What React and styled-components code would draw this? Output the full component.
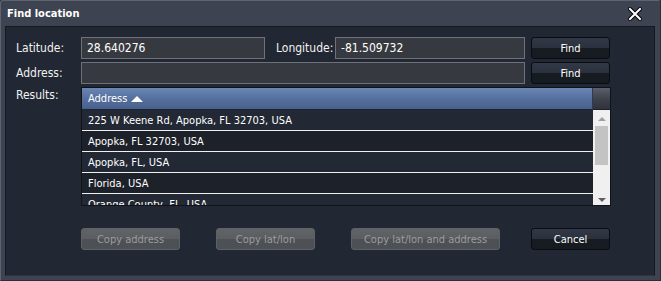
import React from "react";
import styled, { createGlobalStyle } from "styled-components";

const Global = createGlobalStyle`
  html, body { margin: 0; padding: 0; background: #2a2e36; }
  body { font-family: "DejaVu Sans Condensed", "DejaVu Sans", sans-serif; font-size: 11px; }
`;

const Frame = styled.div`
  width: 661px;
  height: 281px;
  box-sizing: border-box;
  background: #3d4350;
  border: 1px solid #5d6370;
  border-right-color: #2a2e36;
  border-bottom-color: #2a2e36;
  border-radius: 3px 3px 0 0;
  display: flex;
  flex-direction: column;
  padding: 0 5px 4px 4px;
`;

const TitleBar = styled.div`
  height: 25px;
  display: flex;
  align-items: center;
  justify-content: space-between;
  padding: 0 13px 0 2px;
  color: #fff;
  font-weight: bold;
  font-size: 11px;
  font-family: "DejaVu Sans Condensed", "DejaVu Sans", sans-serif;
`;

const Body = styled.div`
  flex: 1;
  background: #212733;
  border: 1px solid #151920;
  border-bottom-color: #2e3440;
  padding: 10px 0 0 10px;
  display: flex;
  flex-direction: column;
  color: #fff;
`;

const Row = styled.div`
  display: flex;
  align-items: center;
  height: 22px;
  margin-bottom: ${p => p.$mb || 0}px;
`;

const Label = styled.div`
  width: ${p => p.$w}px;
  color: #f2f2f2;
  font-size: 12px;
  font-family: "DejaVu Sans Condensed", "DejaVu Sans", sans-serif;
  margin-left: ${p => p.$ml || 0}px;
`;

const Input = styled.div`
  width: ${p => p.$w}px;
  height: 22px;
  box-sizing: border-box;
  background: #363a40;
  border: 1px solid #6e7278;
  color: #fff;
  font-size: 12px;
  display: flex;
  align-items: center;
  padding-left: 5px;
  margin-right: ${p => p.$mr || 0}px;
`;

const Button = styled.div`
  width: ${p => p.$w}px;
  height: 22px;
  box-sizing: border-box;
  border-radius: 3px;
  border: 1px solid ${p => (p.$disabled ? "#5e6165" : "#0a0c10")};
  background: ${p =>
    p.$disabled
      ? "linear-gradient(#616467 0, #5a5d61 50%, #4d5054 50%, #4d5054 100%)"
      : "linear-gradient(#323846 0, #2a303c 50%, #171b22 50%, #161a21 100%)"};
  color: ${p => (p.$disabled ? "#9c9c9c" : "#fff")};
  font-size: 11px;
  display: flex;
  align-items: center;
  justify-content: center;
  margin-left: ${p => p.$ml || 0}px;
`;

const ResultsRow = styled.div`
  display: flex;
  align-items: flex-start;
  margin-top: 3px;
`;

const ResultsLabel = styled(Label)`
  padding-top: 1px;
`;

const Table = styled.div`
  width: 530px;
  height: 119px;
  box-sizing: border-box;
  border: 1px solid #0f1217;
  display: grid;
  grid-template-columns: 1fr 17px;
  grid-template-rows: 22px 1fr;
  overflow: hidden;
`;

const Header = styled.div`
  background: linear-gradient(#6a86b3, #55709e 50%, #48608c);
  border-right: 1px solid #2c3a58;
  border-bottom: 1px solid #1c2230;
  display: flex;
  align-items: center;
  padding-left: 6px;
  color: #fff;
  font-size: 11px;
  gap: 4px;
`;

const CornerHead = styled.div`
  background: linear-gradient(#5b5f6b, #3f434d 50%, #30333b);
  border-bottom: 1px solid #1c2230;
`;

const Rows = styled.div`
  overflow: hidden;
`;

const Cell = styled.div`
  height: 20px;
  display: flex;
  align-items: center;
  padding-left: 6px;
  background: ${p => (p.$odd ? "#1d2129" : "#222834")};
  border-bottom: 1px solid #f0f0f0;
  color: #fff;
  font-size: 11px;
  white-space: nowrap;
`;

const Scroll = styled.div`
  background: #f0f0f0;
  display: flex;
  flex-direction: column;
  align-items: center;
  justify-content: space-between;
  padding: 7px 0 3px;
`;

const Thumb = styled.div`
  width: 13px;
  height: 39px;
  background: #c3c3c3;
  margin-top: -2px;
  margin-bottom: auto;
`;

const Arrow = styled.div`
  width: 0;
  height: 0;
  border-left: 4px solid transparent;
  border-right: 4px solid transparent;
  ${p =>
    p.$up
      ? "border-bottom: 4px solid #a0a0a0; margin-bottom: 7px;"
      : "border-top: 4px solid #606060;"}
`;

const SortTri = styled.span`
  width: 0;
  height: 0;
  border-left: 6px solid transparent;
  border-right: 6px solid transparent;
  border-bottom: 6px solid #fff;
  margin-top: 1px;
`;

const Footer = styled.div`
  display: flex;
  align-items: center;
  margin-top: 22px;
  padding-left: 65px;
`;

const Close = styled.svg`
  width: 14px;
  height: 14px;
`;

const rows = [
  "225 W Keene Rd, Apopka, FL 32703, USA",
  "Apopka, FL 32703, USA",
  "Apopka, FL, USA",
  "Florida, USA",
  "Orange County, FL, USA",
];

export default function App() {
  return (
    <>
      <Global />
      <Frame>
        <TitleBar>
          <span>Find location</span>
          <Close viewBox="0 0 14 14">
            <path d="M2 2 L12 12 M12 2 L2 12" stroke="#000" strokeWidth="4" strokeLinecap="square" />
            <path d="M2 2 L12 12 M12 2 L2 12" stroke="#fff" strokeWidth="2" strokeLinecap="square" />
          </Close>
        </TitleBar>
        <Body>
          <Row $mb={3}>
            <Label $w={65}>Latitude:</Label>
            <Input $w={184}>28.640276</Input>
            <Label $w={59} $ml={11}>Longitude:</Label>
            <Input $w={190}>-81.509732</Input>
            <Button $w={79} $ml={6}>Find</Button>
          </Row>
          <Row>
            <Label $w={65}>Address:</Label>
            <Input $w={444} />
            <Button $w={79} $ml={6}>Find</Button>
          </Row>
          <ResultsRow>
            <ResultsLabel $w={65}>Results:</ResultsLabel>
            <Table>
              <Header>
                Address <SortTri />
              </Header>
              <CornerHead />
              <Rows>
                {rows.map((r, i) => (
                  <Cell key={r} $odd={i % 2 === 1}>{r}</Cell>
                ))}
              </Rows>
              <Scroll>
                <Arrow $up />
                <Thumb />
                <Arrow />
              </Scroll>
            </Table>
          </ResultsRow>
          <Footer>
            <Button $w={99} $disabled>Copy address</Button>
            <Button $w={99} $ml={36} $disabled>Copy lat/lon</Button>
            <Button $w={149} $ml={36} $disabled>Copy lat/lon and address</Button>
            <Button $w={79} $ml={31}>Cancel</Button>
          </Footer>
        </Body>
      </Frame>
    </>
  );
}
